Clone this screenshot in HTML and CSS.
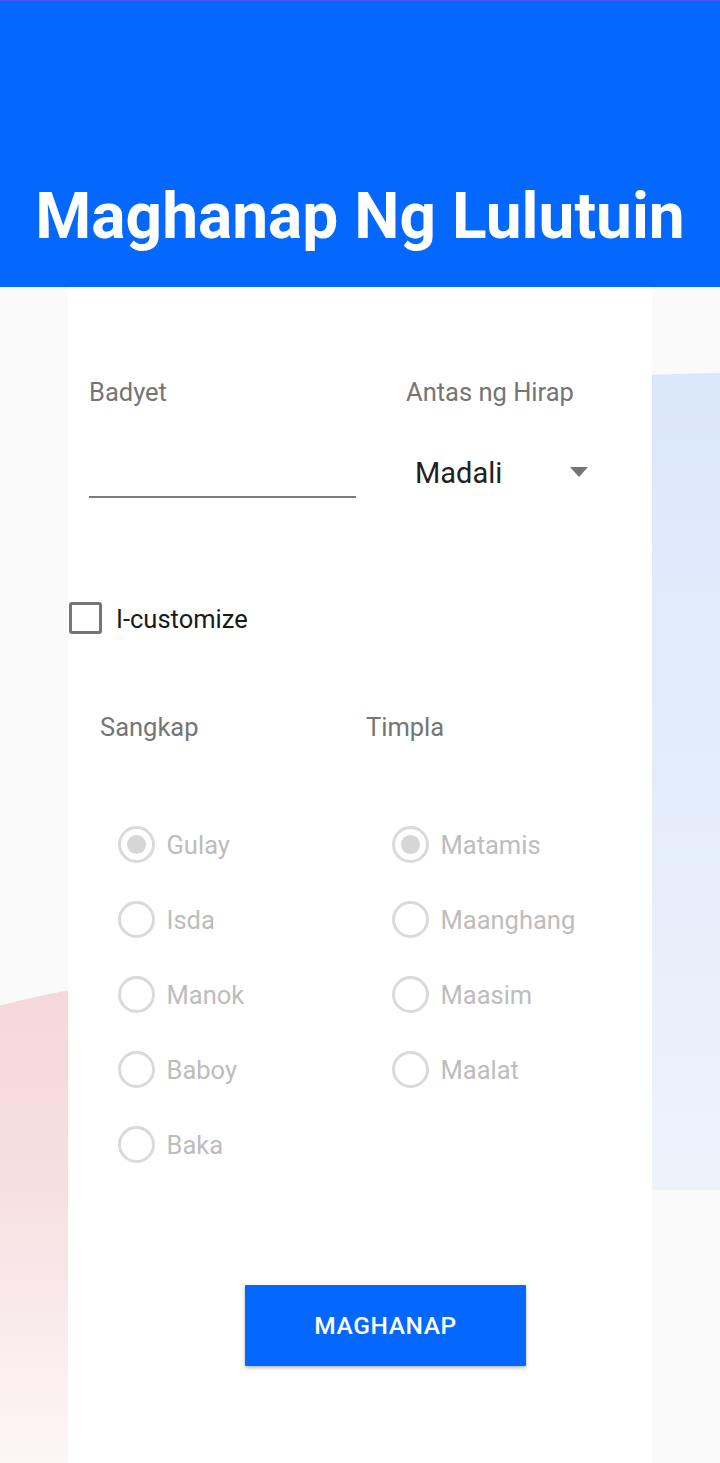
FILE: index.html
```html
<!DOCTYPE html>
<html lang="tl">
<head>
<meta charset="utf-8">
<title>Maghanap Ng Lulutuin</title>
<link rel="stylesheet" href="styles.css">
</head>
<body>
<div class="page">
  <div class="blob blob-blue"></div>
  <div class="blob blob-pink"></div>
  <header class="appbar">
    <h1 class="title">Maghanap Ng Lulutuin</h1>
  </header>
  <main class="card">
    <div class="fields">
      <div class="field field-budget">
        <div class="label">Badyet</div>
        <div class="input"></div>
      </div>
      <div class="field field-level">
        <div class="label">Antas ng Hirap</div>
        <div class="spinner">
          <span class="spinner-text">Madali</span>
          <span class="caret"></span>
        </div>
      </div>
    </div>

    <div class="check-row">
      <span class="checkbox"></span>
      <span class="check-label">I-customize</span>
    </div>

    <div class="groups">
      <div class="group group-left">
        <div class="group-title">Sangkap</div>
        <div class="radios">
          <div class="radio-row"><span class="radio checked"><span class="dot"></span></span><span class="radio-label">Gulay</span></div>
          <div class="radio-row"><span class="radio"></span><span class="radio-label">Isda</span></div>
          <div class="radio-row"><span class="radio"></span><span class="radio-label">Manok</span></div>
          <div class="radio-row"><span class="radio"></span><span class="radio-label">Baboy</span></div>
          <div class="radio-row"><span class="radio"></span><span class="radio-label">Baka</span></div>
        </div>
      </div>
      <div class="group group-right">
        <div class="group-title">Timpla</div>
        <div class="radios">
          <div class="radio-row"><span class="radio checked"><span class="dot"></span></span><span class="radio-label">Matamis</span></div>
          <div class="radio-row"><span class="radio"></span><span class="radio-label">Maanghang</span></div>
          <div class="radio-row"><span class="radio"></span><span class="radio-label">Maasim</span></div>
          <div class="radio-row"><span class="radio"></span><span class="radio-label">Maalat</span></div>
        </div>
      </div>
    </div>

    <div class="actions">
      <button class="btn" type="button">MAGHANAP</button>
    </div>
  </main>
</div>
</body>
</html>
```

FILE: styles.css
```css
* { box-sizing: border-box; }

html, body {
  margin: 0;
  padding: 0;
}

body {
  background: #fafafa;
  font-family: Roboto, "Noto Sans", "Liberation Sans", sans-serif;
  overflow: hidden;
}

.page {
  position: relative;
  width: 720px;
  min-height: 1463px;
  overflow: hidden;
  display: flex;
  flex-direction: column;
}

.blob {
  position: absolute;
  z-index: 0;
}

.blob-blue {
  left: 300px;
  top: 372px;
  width: 520px;
  height: 818px;
  border-top-left-radius: 600px 60px;
  background: linear-gradient(180deg, #dbe7fb 0%, #e6eefb 60%, #eef3fb 100%);
}

.blob-pink {
  left: -100px;
  top: 972px;
  width: 600px;
  height: 500px;
  border-top-left-radius: 400px 100px;
  background: linear-gradient(180deg, #f5d7da 0%, #f7e0e2 45%, #fdf7f7 100%);
}

.appbar {
  position: relative;
  z-index: 1;
  height: 287px;
  background: #0568fe;
  border-top: 1px solid #4a52ec;
  display: flex;
  align-items: flex-end;
  justify-content: center;
  padding-bottom: 38px;
}

.title {
  margin: 0;
  color: #ffffff;
  font-weight: 700;
  font-size: 64px;
  line-height: 64px;
  white-space: nowrap;
}

.card {
  position: relative;
  z-index: 1;
  width: 584px;
  margin: 0 auto;
  flex: 1;
  background: #ffffff;
  padding-top: 90px;
  padding-bottom: 60px;
}

.label, .group-title {
  font-size: 25.5px;
  line-height: 30px;
  color: #757575;
}

.fields {
  display: flex;
  align-items: flex-start;
  padding-left: 21px;
  gap: 50px;
}

.field-budget {
  width: 267px;
}

.input {
  height: 91px;
  border-bottom: 2px solid #7c7c7c;
}

.field-level {
  width: 182px;
}

.spinner {
  margin-top: 49px;
  display: flex;
  align-items: center;
  justify-content: space-between;
  padding-left: 9px;
}

.spinner-text {
  font-size: 29px;
  line-height: 34px;
  color: #212121;
}

.caret {
  width: 0;
  height: 0;
  border-left: 9px solid transparent;
  border-right: 9px solid transparent;
  border-top: 10px solid #757575;
  margin-top: -2px;
}

.check-row {
  margin-top: 104px;
  display: flex;
  align-items: center;
  gap: 14px;
  padding-left: 1px;
}

.checkbox {
  width: 33px;
  height: 32px;
  border: 3px solid #757575;
  border-radius: 3px;
  flex: none;
}

.check-label {
  font-size: 25.5px;
  line-height: 30px;
  color: #1a1a1a;
  margin-top: 2px;
}

.groups {
  margin-top: 78px;
  display: flex;
  padding-left: 32px;
}

.group-left {
  width: 266px;
}

.radios {
  margin-top: 65px;
  display: flex;
  flex-direction: column;
}

.group-left .radios {
  margin-left: 17.5px;
}

.group-right .radios {
  margin-left: 25.5px;
}

.radio-row {
  height: 75px;
  display: flex;
  align-items: center;
  gap: 12px;
}

.radio {
  width: 37px;
  height: 37px;
  border: 3.5px solid #dadada;
  border-radius: 50%;
  display: flex;
  align-items: center;
  justify-content: center;
  flex: none;
}

.dot {
  width: 19px;
  height: 19px;
  border-radius: 50%;
  background: #d6d6d6;
}

.radio-label {
  font-size: 25.5px;
  line-height: 30px;
  color: #bdbdbd;
}

.actions {
  margin-top: 103px;
  padding-left: 177px;
}

.btn {
  width: 281px;
  height: 81px;
  border: none;
  border-radius: 1px;
  background: #0568fe;
  color: #ffffff;
  font-family: Roboto, "Noto Sans", "Liberation Sans", sans-serif;
  font-weight: 500;
  font-size: 24.5px;
  letter-spacing: 0.6px;
  box-shadow: 0 2px 4px rgba(0, 0, 0, 0.22), 0 1px 2px rgba(0, 0, 0, 0.12);
  cursor: pointer;
}
```
